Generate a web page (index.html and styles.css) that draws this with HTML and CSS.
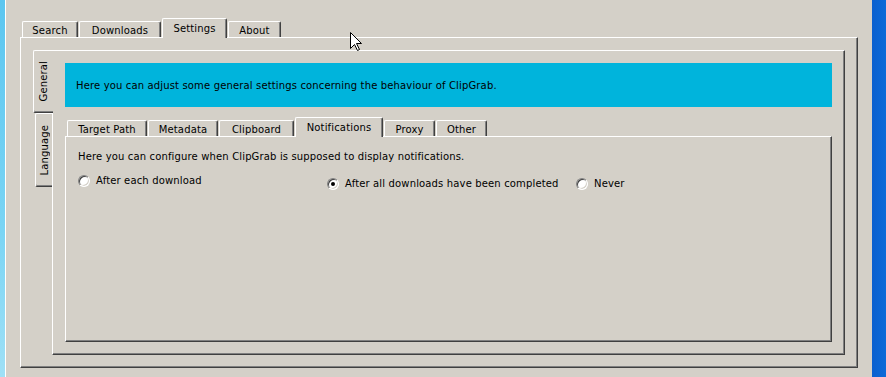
FILE: index.html
```html
<!DOCTYPE html>
<html lang="en">
<head>
    <meta charset="UTF-8">
    <title>ClipGrab - Settings</title>
    <link rel="stylesheet" href="styles.css">
</head>
<body>
    <div class="desktop-left"></div>

    <div class="window">
        <div class="main-tabs">
            <div class="tab tab-search">Search</div>
            <div class="tab tab-downloads">Downloads</div>
            <div class="tab tab-settings active">Settings</div>
            <div class="tab tab-about">About</div>
        </div>

        <div class="pane main-pane">
            <div class="side-tabs-widget">
                <div class="side-tabs">
                    <div class="side-tab side-general active"><span>General</span></div>
                    <div class="side-tab side-language"><span>Language</span></div>
                </div>

                <div class="pane side-pane">
                    <div class="banner">Here you can adjust some general settings concerning the behaviour of ClipGrab.</div>

                    <div class="sub-tabs">
                        <div class="tab sub-target">Target Path</div>
                        <div class="tab sub-metadata">Metadata</div>
                        <div class="tab sub-clipboard">Clipboard</div>
                        <div class="tab sub-notifications active">Notifications</div>
                        <div class="tab sub-proxy">Proxy</div>
                        <div class="tab sub-other">Other</div>
                    </div>

                    <div class="pane sub-pane">
                        <p class="hint">Here you can configure when ClipGrab is supposed to display notifications.</p>
                        <div class="options">
                            <label class="option first"><span class="radio"></span>After each download</label>
                            <label class="option"><span class="radio checked"></span>After all downloads have been completed</label>
                            <label class="option"><span class="radio"></span>Never</label>
                        </div>
                    </div>
                </div>
            </div>
        </div>
    </div>

    <div class="desktop-right"></div>

    <svg class="cursor" width="13" height="20" viewBox="0 0 13 20">
        <path d="M0.5 0.5 L0.5 16.5 L4.5 12.5 L7.5 18.5 L9.5 17.5 L6.5 11.5 L11.5 11.5 Z" fill="#fff" stroke="#000" stroke-width="1"/>
    </svg>
</body>
</html>
```

FILE: styles.css
```css
* {
    box-sizing: border-box;
}

body {
    margin: 0;
    width: 886px;
    height: 377px;
    overflow: hidden;
    display: flex;
    background-color: #d4d0c8;
    font-family: "DejaVu Sans", Verdana, sans-serif;
    font-size: 10px;
    letter-spacing: 0.15px;
    color: #000;
    position: relative;
}

.desktop-left {
    width: 5px;
    background: linear-gradient(180deg, #5cc6f0 0%, #79d4f4 60%, #9fe0f6 100%);
}

.desktop-right {
    width: 14px;
    background: linear-gradient(90deg, #0a5fcf 0%, #0c6ad8 100%);
}

.window {
    width: 867px;
    height: 377px;
    border-left: 1px solid #fff;
    padding: 18px 14px 0 14px;
    display: flex;
    flex-direction: column;
}

/* classic raised frame */
.pane {
    background-color: #d4d0c8;
    border: 1px solid;
    border-color: #fff #404040 #404040 #fff;
    box-shadow: inset -1px -1px 0 #808080;
}

/* tabs */
.main-tabs,
.sub-tabs {
    display: flex;
    align-items: flex-end;
    gap: 1px;
    padding-left: 2px;
    height: 19px;
    position: relative;
    z-index: 1;
}

.tab {
    height: 16px;
    line-height: 17px;
    text-align: center;
    background-color: #d4d0c8;
    border: 1px solid;
    border-color: #fff #404040 transparent #fff;
    border-bottom: none;
    border-radius: 2px 2px 0 0;
    box-shadow: inset -1px 0 0 #808080;
    white-space: nowrap;
}

.tab.active {
    height: 20px;
    line-height: 19px;
    margin-bottom: -1px;
}

.tab-search { width: 56px; }
.tab-downloads { width: 82px; }
.tab-settings { width: 65px; }
.tab-about { width: 53px; }

.sub-target { width: 80px; }
.sub-metadata { width: 70px; }
.sub-clipboard { width: 75px; }
.sub-notifications { width: 88px; }
.sub-proxy { width: 51px; }
.sub-other { width: 51px; }

.main-pane {
    width: 838px;
    height: 331px;
    padding: 12px;
}

/* vertical tab widget */
.side-tabs-widget {
    display: flex;
    height: 305px;
}

.side-tabs {
    display: flex;
    flex-direction: column;
    width: 19px;
    position: relative;
    z-index: 1;
}

.side-tab {
    display: flex;
    align-items: center;
    justify-content: center;
    background-color: #d4d0c8;
    border: 1px solid;
    border-color: #fff transparent #404040 #fff;
    border-right: none;
    border-radius: 2px 0 0 2px;
    box-shadow: inset 0 -1px 0 #808080;
}

.side-tab span {
    writing-mode: vertical-rl;
    transform: rotate(180deg);
    white-space: nowrap;
}

.side-tab.active {
    width: 20px;
    margin-right: -1px;
}

.side-general { height: 63px; }
.side-language { height: 74px; margin-left: 2px; }

.side-pane {
    width: 793px;
    height: 305px;
    padding: 12px;
    display: flex;
    flex-direction: column;
}

.banner {
    height: 44px;
    background-color: #00b4dc;
    padding-left: 11px;
    line-height: 46px;
}

.sub-tabs {
    margin-top: 10px;
}

.sub-pane {
    flex: 1;
    padding: 13px 12px;
}

.hint {
    margin: 0;
    line-height: 14px;
}

.options {
    display: grid;
    grid-template-columns: 249px 249px auto;
    margin-top: 11px;
    align-items: start;
}

.option {
    display: flex;
    align-items: center;
    gap: 6px;
    line-height: 12px;
    margin-top: 3px;
}

.option.first {
    margin-top: 0;
}

.radio {
    width: 12px;
    height: 12px;
    border-radius: 50%;
    background-color: #fff;
    border: 1px solid;
    border-color: #808080 #fff #fff #808080;
    box-shadow: inset 1px 1px 0 #404040, inset -1px -1px 0 #d4d0c8;
    position: relative;
    flex: none;
}

.radio.checked::after {
    content: "";
    position: absolute;
    left: 3px;
    top: 3px;
    width: 4px;
    height: 4px;
    border-radius: 50%;
    background-color: #000;
}

.cursor {
    position: absolute;
    left: 350px;
    top: 32px;
}
```
